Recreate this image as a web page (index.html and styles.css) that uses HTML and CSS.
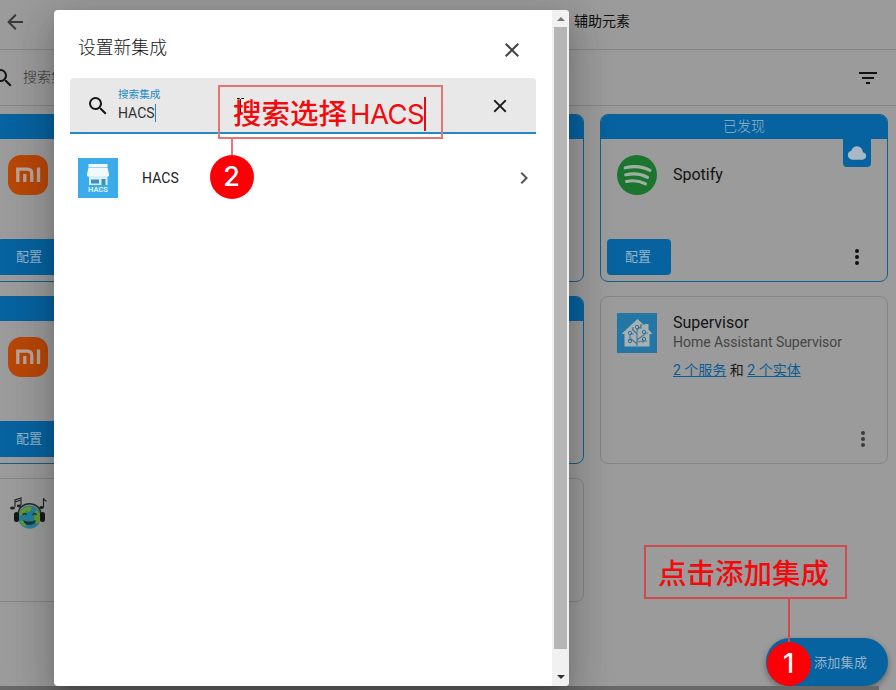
FILE: index.html
```html
<!DOCTYPE html>
<html lang="zh-CN">
<head>
<meta charset="utf-8">
<title>集成</title>
<link rel="stylesheet" href="styles.css">
</head>
<body>
<div class="page">
  <header class="topbar">
    <svg class="back" viewBox="0 0 24 24"><path d="M20 11v2H8l5.500 5.500-1.420 1.420L4.160 12l7.920-7.920L13.500 5.500 8 11z"/></svg>
    <span class="tab">辅助元素</span>
  </header>
  <div class="filterbar">
    <svg class="glass" viewBox="0 0 24 24"><path d="M9.500 3A6.500 6.500 0 0 1 16 9.500c0 1.610-.59 3.090-1.560 4.230l.27.27h.79l5 5-1.500 1.500-5-5v-.79l-.27-.27A6.516 6.516 0 0 1 9.500 16a6.500 6.500 0 0 1 0-13m0 2C7 5 5 7 5 9.500S7 14 9.500 14 14 12 14 9.500 12 5 9.500 5"/></svg>
    <span class="filter-label">搜索集成</span>
    <svg class="filter" viewBox="0 0 24 24"><path d="M6 13h12v-2H6M3 6v2h18V6M10 18h4v-2h-4z"/></svg>
  </div>
  <main class="cards">
    <article class="card found">
      <div class="banner"></div>
      <div class="body"><svg class="logo" viewBox="0 0 40 40"><rect width="40" height="40" rx="13" fill="#b84708"/><path d="M9.800 27V14.200h9.500q4.500 0 4.500 4.500V27M16.800 27v-8M30.500 12.500V27" fill="none" stroke="#b8a59b" stroke-width="3.300"/></svg></div>
      <div class="actions"><span class="btn">配置</span></div>
    </article>
    <article class="card found"><div class="banner"></div></article>
    <article class="card found">
      <div class="banner">已发现</div>
      <div class="cloud"><svg viewBox="0 0 24 24"><path d="M6.500 20q-2.280 0-3.890-1.570Q1 16.850 1 14.580q0-1.950 1.170-3.480 1.180-1.530 3.080-1.950.63-2.300 2.500-3.720Q9.630 4 12 4q2.930 0 4.960 2.040Q19 8.070 19 11q1.730.2 2.860 1.500 1.140 1.280 1.140 3 0 1.880-1.310 3.190T18.500 20z"/></svg></div>
      <div class="body">
        <svg class="logo" viewBox="0 0 40 40"><circle cx="20" cy="20" r="20" fill="#1b752f"/><path d="M8.200 12.800c8.500-2 17.500-1.400 24.800 2.500M8.700 19.800c8-1.800 15.500-1 21.800 2.600M9.500 26.500c6.500-1.400 13-.8 19 2.300" fill="none" stroke="#a0ada2" stroke-linecap="round" stroke-width="3.100"/></svg>
        <div class="name">Spotify</div>
      </div>
      <div class="actions"><span class="btn">配置</span><svg class="dots" viewBox="0 0 24 24"><path d="M12 16a2 2 0 1 1 0 4 2 2 0 0 1 0-4m0-6a2 2 0 1 1 0 4 2 2 0 0 1 0-4m0-6a2 2 0 1 1 0 4 2 2 0 0 1 0-4"/></svg></div>
    </article>
    <article class="card found">
      <div class="banner"></div>
      <div class="body"><svg class="logo" viewBox="0 0 40 40"><rect width="40" height="40" rx="13" fill="#b84708"/><path d="M9.800 27V14.200h9.500q4.500 0 4.500 4.500V27M16.800 27v-8M30.500 12.500V27" fill="none" stroke="#b8a59b" stroke-width="3.300"/></svg></div>
      <div class="actions"><span class="btn">配置</span></div>
    </article>
    <article class="card found"><div class="banner"></div></article>
    <article class="card">
      <div class="body top">
        <svg class="logo" viewBox="0 0 40 40"><rect width="40" height="40" fill="#2477a5"/><path d="M4.500 21 20.500 6l7 6.500V11h4v5.500l4 4.500h-3v12.500h-25V21z" fill="#a6b1b5"/><path d="M20 33V15m0 16-7-6v-4m7 6 8-6m-8 0-5-5m5 1 5-5m-11 15h-3m9 2 6-1h4m-13-7h-4m11-5v-5m-8 3v4m11 2h4m-5 6v4" fill="none" stroke="#52798d" stroke-width="1.200"/><g fill="none" stroke="#2f7298"><circle cx="13" cy="20" r="1.700"/><circle cx="20" cy="14" r="1.700"/><circle cx="27" cy="19" r="1.700"/><circle cx="13" cy="28" r="1.700"/><circle cx="27" cy="26" r="1.700"/></g></svg>
        <div>
          <div class="name">Supervisor</div>
          <div class="sub">Home Assistant Supervisor</div>
          <div class="links"><a>2 个服务</a> 和 <a>2 个实体</a></div>
        </div>
      </div>
      <svg class="dots muted" viewBox="0 0 24 24"><path d="M12 16a2 2 0 1 1 0 4 2 2 0 0 1 0-4m0-6a2 2 0 1 1 0 4 2 2 0 0 1 0-4m0-6a2 2 0 1 1 0 4 2 2 0 0 1 0-4"/></svg>
    </article>
    <article class="card">
      <div class="body top">
        <svg class="logo" viewBox="0 0 40 40"><path d="M10 20C10 5 33 5 33 20" fill="none" stroke="#292929" stroke-width="1.500"/><circle cx="21.500" cy="22" r="11.500" fill="#277e9b"/><path d="M13 15q6-5 11-3l-2 5-4-1-2 4-5 1zM28 14l5 6-1 7-4 2-2-6zM12 26l4-1 2 7-4-2z" fill="#689b2f"/><path d="M14.500 20q2-3 4 0m6 0q2-3 4 0" fill="none" stroke="#173c42" stroke-width="1.400"/><path d="M15 25q6.500 3 13 0-1 5-6.500 5T15 25" fill="#163c3c"/><rect x="6" y="17" width="5" height="10" rx="2.500" fill="#171717"/><rect x="32" y="17" width="5" height="10" rx="2.500" fill="#171717"/><path d="M7 12V5l6-2v7M7 7l6-2M35.500 12V3q0 2 3 3" fill="none" stroke="#222" stroke-width="1.100"/><g fill="#222"><ellipse cx="4.500" cy="13" rx="2.500" ry="1.500"/><ellipse cx="11" cy="11" rx="2.200" ry="1.400"/><ellipse cx="33.500" cy="12.500" rx="2.200" ry="1.500"/></g></svg>
      </div>
    </article>
    <article class="card"></article>
  </main>
  <div class="fab">添加集成</div>
  <div class="taskline"></div>
</div>

<section class="dialog">
  <div class="content">
    <div class="heading"><h1>设置新集成</h1><svg viewBox="0 0 24 24"><path d="M19 6.410 17.590 5 12 10.590 6.410 5 5 6.410 10.590 12 5 17.590 6.410 19 12 13.410 17.590 19 19 17.590 13.410 12z"/></svg></div>
    <div class="search">
      <svg class="search-icon" viewBox="0 0 24 24"><path d="M9.500 3A6.500 6.500 0 0 1 16 9.500c0 1.610-.59 3.090-1.560 4.230l.27.27h.79l5 5-1.500 1.500-5-5v-.79l-.27-.27A6.516 6.516 0 0 1 9.500 16a6.500 6.500 0 0 1 0-13m0 2C7 5 5 7 5 9.500S7 14 9.500 14 14 12 14 9.500 12 5 9.500 5"/></svg>
      <div class="field"><div class="label">搜索集成</div><div class="value">HACS</div></div>
      <svg class="clear" viewBox="0 0 24 24"><path d="M19 6.410 17.590 5 12 10.590 6.410 5 5 6.410 10.590 12 5 17.590 6.410 19 12 13.410 17.590 19 19 17.590 13.410 12z"/></svg>
    </div>
    <div class="result">
      <svg class="logo" viewBox="0 0 40 40"><rect width="40" height="40" fill="#3cabec"/><path d="M10.500 6h19v3h-19zM10.500 9.500h19l1.500 6.500v2q-2 1.500-4 0-2 1.500-4 0-1.500 1.500-3 0-1.500 1.500-3 0-2 1.500-4 0-2 1.500-4 0v-2z" fill="#f1f9fe"/><path d="M11 18h18.500v9H11z" fill="#d9effc"/><path d="M13 21.500h8v4h-8zM23.500 21h4v6h-4z" fill="#3e8ebc"/><text x="20" y="34.400" text-anchor="middle" textLength="20" lengthAdjust="spacingAndGlyphs" class="logo-text">HACS</text></svg>
      <span>HACS</span>
      <svg class="chevron" viewBox="0 0 24 24"><path d="M8.590 16.580 13.170 12 8.590 7.410 10 6l6 6-6 6z"/></svg>
    </div>
  </div>
  <div class="scroll"><i class="up"></i><div class="thumb"></div><i class="down"></i></div>
</section>

<svg class="pointer" viewBox="0 0 7 16"><path d="M0 .5h2.500l1 1 1-1H7M3.500 1.500V15" fill="none" stroke="#111"/></svg>
<div class="note note-two">搜索选择<span>HACS</span></div>
<div class="stem stem-two"></div><div class="step step-two">2</div>
<div class="note note-one">点击添加集成</div>
<div class="stem stem-one"></div><div class="step step-one">1</div>
</body>
</html>
```
FILE: styles.css
```css
* { box-sizing: border-box; }
body {
  margin: 0;
  width: 896px;
  height: 690px;
  position: relative;
  overflow: hidden;
  background: #9b9b9b;
  color: #151515;
  font: 14px/20px Roboto, "Noto Sans CJK SC", sans-serif;
}
svg { display: block; flex: none; }
.page { height: 690px; overflow: hidden; }
.topbar { height: 50px; border-bottom: 1px solid #858585; display: flex; align-items: center; padding-bottom: 6px; }
.back { width: 24px; height: 24px; margin-left: 3px; fill: #393939; }
.tab { margin: 0 0 2px 547px; color: #101010; }
.filterbar { height: 56px; border-bottom: 1px solid #858585; display: flex; align-items: center; padding-right: 16px; }
.glass { width: 24px; height: 24px; margin-left: -9px; fill: #151515; }
.filter-label { margin: 0 0 2px 8px; color: #333; font-weight: 300; }
.filter { width: 24px; height: 24px; margin-left: auto; fill: #111; }
.cards {
  display: grid;
  grid-template-columns: 289px 288px 288px;
  grid-template-rows: 168px 168px 124px;
  gap: 14px 16px;
  margin: 8px 0 0 -9px;
}
.card { position: relative; border: 1px solid #858585; border-radius: 8px; display: flex; flex-direction: column; overflow: hidden; }
.found { border-color: #12608c; }
.banner { height: 24px; flex: none; background: #0762a0; color: #94b5cb; text-align: center; line-height: 23px; font-weight: 300; }
.cloud { position: absolute; right: 16px; top: 23px; width: 28px; height: 29px; border-radius: 0 0 4px 4px; background: #0762a0; padding: 5px 4px; }
.cloud svg { width: 20px; height: 20px; fill: #a8b8c4; }
.body { display: flex; gap: 16px; padding: 16px; }
.logo { width: 40px; height: 40px; }
.name { font-size: 16px; line-height: 20px; color: #131313; align-self: center; }
.sub { color: #454545; line-height: 19px; letter-spacing: -.03px; }
.links { margin-top: 7px; line-height: 22px; color: #171717; }
.links a { color: #0b5c92; text-decoration: underline; }
.actions { margin-top: auto; padding: 0 18px 6px 6px; display: flex; align-items: center; justify-content: space-between; }
.btn { width: 64px; height: 36px; border-radius: 4px; background: #0762a0; color: #94b5cb; font-size: 13px; line-height: 35px; text-align: center; padding-right: 2px; }
.dots { width: 24px; height: 24px; fill: #111; }
.dots.muted { margin: auto 12px 12px auto; fill: #3b3b3b; }
.fab {
  position: absolute;
  left: 766px;
  top: 638px;
  width: 122px;
  height: 48px;
  border-radius: 24px;
  padding-left: 48px;
  background: #0762a0;
  color: #94b5cb;
  font-size: 13px;
  letter-spacing: .3px;
  line-height: 49px;
  box-shadow: 0 3px 6px rgba(0, 0, 0, .35);
}
.taskline { position: absolute; left: 0; top: 686px; width: 879px; height: 4px; background: #686868; }

.dialog {
  position: absolute;
  left: 54px;
  top: 10px;
  width: 515px;
  height: 676px;
  display: flex;
  border-radius: 4px;
  overflow: hidden;
  background: #fff;
  box-shadow: 0 11px 15px -7px rgba(0, 0, 0, .2), 0 16px 38px 3px rgba(0, 0, 0, .14), 0 9px 46px 8px rgba(0, 0, 0, .12);
}
.content { flex: 1; padding: 0 16px; }
.heading { height: 68px; display: flex; align-items: center; justify-content: space-between; padding: 8px 12px 0 8px; }
.heading h1 { margin: 0; font-size: 17.800px; font-weight: 300; line-height: 24px; }
.heading svg { width: 24px; height: 24px; margin-top: 4px; fill: #424242; }
.search { height: 56px; display: flex; align-items: center; background: #e8e8e8; border-bottom: 2px solid #2389c2; border-radius: 4px 4px 0 0; padding: 0 25px 0 16px; }
.search-icon { width: 24px; height: 24px; margin-top: 2px; fill: #151515; }
.field { margin-left: 8px; }
.label { color: #2389c2; font-size: 10.600px; line-height: 16px; margin-top: -1px; }
.value { width: 38px; height: 18px; border-right: 1px solid #2389c2; line-height: 18px; margin-top: 1px; color: #333; white-space: nowrap; }
.clear { width: 22px; height: 22px; margin: 2px 0 0 auto; fill: #1b1b1b; }
.result { height: 88px; display: flex; align-items: center; padding: 0 0 0 8px; }
.result span { margin-left: 24px; color: #222; letter-spacing: .1px; }
.logo-text { font: 700 8px Roboto, sans-serif; fill: #d9f1ff; }
.chevron { width: 24px; height: 24px; margin-left: auto; fill: #555; }
.scroll { width: 17px; display: flex; flex-direction: column; align-items: center; background: #f1f1f1; }
.up, .down { border: 4px solid transparent; }
.up { height: 4px; border-top: 0; border-bottom-color: #777; margin: 7px 0 6px; }
.thumb { width: 13px; height: 622px; background: #b5b5b5; }
.down { border-bottom: 0; border-top-color: #333; margin-top: 26px; }

.pointer { position: absolute; left: 237px; top: 98px; width: 7px; height: 16px; }
.note { position: absolute; border: 2px solid #e27478; color: #f20a0d; font-family: "Noto Sans CJK SC", sans-serif; font-size: 28.500px; font-weight: 500; white-space: nowrap; }
.note-two { left: 218px; top: 85px; width: 225px; height: 54px; padding-left: 13px; line-height: 50px; }
.note-two span { margin-left: 3px; font-family: Inter, sans-serif; font-size: 27.500px; font-weight: 400; display: inline-block; height: 34px; line-height: 34px; border-right: 2px solid #e00d10; letter-spacing: -.5px; }
.note-one { left: 644px; top: 545px; width: 203px; height: 54px; padding-left: 12px; line-height: 50px; border-color: #d14b4e; }
.stem { position: absolute; width: 2px; background: #ea7377; }
.stem-two { left: 231px; top: 139px; height: 18px; }
.stem-one { left: 788px; top: 599px; height: 43px; background: #d14b4e; }
.step { position: absolute; width: 44px; height: 44px; border-radius: 50%; background: #fb0006; color: #fff; text-align: center; font: 500 27px/44px Inter, sans-serif; }
.step-two { left: 209.500px; top: 155px; }
.step-one { left: 766.500px; top: 641.500px; }
```
